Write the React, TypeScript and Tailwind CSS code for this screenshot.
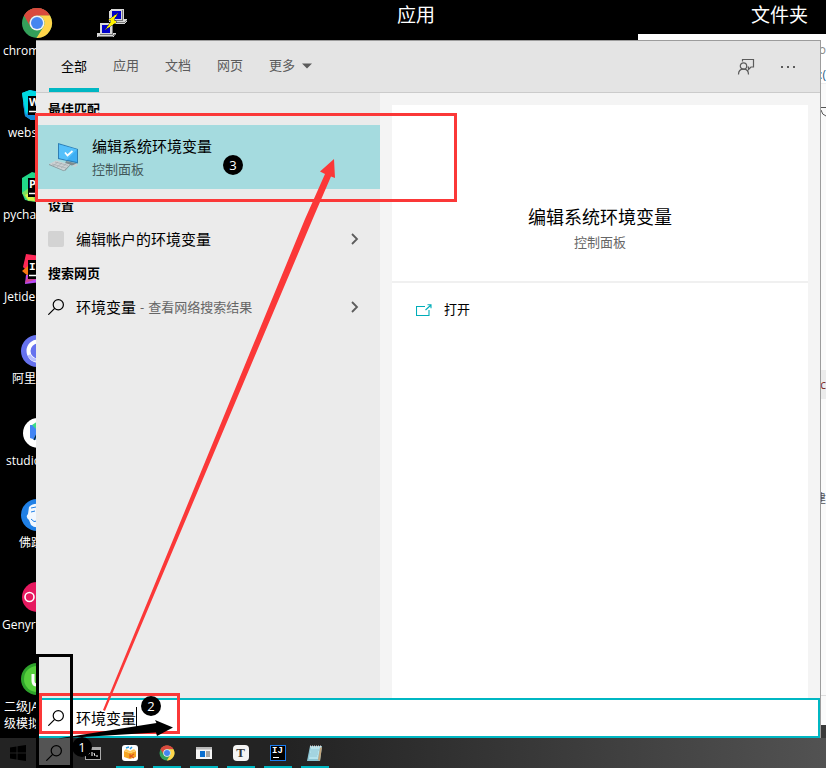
import React from "react";

function ChromeIcon({ className }: { className: string }) {
  return (
    <svg viewBox="0 0 32 32" className={className} aria-hidden="true">
      <circle cx="16" cy="16" r="15" fill="#34a05a" />
      <path d="M3 8.5A15 15 0 0 1 29 8.5H16a7.5 7.5 0 0 0-7 5z" fill="#d94a3d" />
      <path d="M3 8.5 9.5 20A7.5 7.5 0 0 1 16 8.5L29 8.5A15 15 0 0 0 3 8.5z" fill="#d94a3d" />
      <path d="M29 8.5A15 15 0 0 1 15.500 31L22.500 19.750A7.500 7.500 0 0 0 16 8.500z" fill="#ffd54a" />
      <circle cx="16" cy="16" r="7.500" fill="#f3f3f3" />
      <circle cx="16" cy="16" r="6" fill="#4486f0" />
    </svg>
  );
}

function JetBrainsIcon({ kind }: { kind: "WS" | "PC" | "IJ" }) {
  const shapes = {
    WS: (
      <>
        <path d="M1 4 9 1l21 4-2 24-18 2-6-4z" fill="#07c3f2" />
        <path d="m2 14 26 4-2 12-16 1-6-4z" fill="#1688d8" />
        <path d="m1 4 8-3 8 3L5 26z" fill="#00d8e0" />
      </>
    ),
    PC: (
      <>
        <path d="m1 7 10-6 18 5 1 20-14 5-12-2-3-7z" fill="#21d789" />
        <path d="m1 22 8-6 10 15-12-1z" fill="#7be25c" />
        <path d="m4 24 6-3 4 9-7-1z" fill="#d8f24a" />
      </>
    ),
    IJ: (
      <>
        <path d="m5 1 22 3 3 14-18 6-10-10z" fill="#fe2857" />
        <path d="m1 18 6-5 6 6-6 4z" fill="#f97a12" />
        <path d="m5 22 20-2 3 8-24 3z" fill="#b74af7" />
        <path d="m4 30 3-8 9 4z" fill="#d14493" />
      </>
    ),
  };
  return (
    <svg viewBox="0 0 32 32" className="size-8" aria-hidden="true">
      {shapes[kind]}
      <rect x="7" y="7" width="19" height="19" fill="#000" />
      <text x="8" y="17" fontSize="11" fontWeight="700" fill="#fff" fontFamily={kind === "IJ" ? "Liberation Mono, monospace" : "Open Sans, sans-serif"}>
        {kind === "WS" ? "W" : kind === "PC" ? "P" : "I"}
      </text>
      <path d="M8 22.500h8" stroke="#fff" strokeWidth="1.500" />
    </svg>
  );
}

function CloudDriveIcon() {
  return (
    <svg viewBox="0 0 32 32" className="size-8" aria-hidden="true">
      <circle cx="16" cy="16" r="16" fill="#6672ee" />
      <circle cx="17" cy="16" r="9.500" fill="none" stroke="#fff" strokeWidth="4" />
      <path d="M8 20a9 9 0 0 0 9 5" fill="none" stroke="#b9c0ff" strokeWidth="3" />
    </svg>
  );
}

function StudioIcon() {
  return (
    <svg viewBox="0 0 32 32" className="size-8" aria-hidden="true">
      <circle cx="17" cy="16" r="15" fill="#fff" />
      <path d="M9 8h13v13l-7 2-6-2z" fill="#4285f4" />
      <path d="m11 8 6-4 5 4-5 6z" fill="#3ddc84" />
      <path d="m13 23 3-6 3-8" stroke="#073042" strokeWidth="1.500" fill="none" />
    </svg>
  );
}

function BuddhaIcon() {
  return (
    <svg viewBox="0 0 32 32" className="size-8" aria-hidden="true">
      <circle cx="16" cy="16" r="16" fill="#2080e6" />
      <path d="M8 8q4-4 10-3l6 8-2 12q-6 6-12 1l-2-5q-4-3-1-6z" fill="#f2f8ff" />
      <path d="m10 9 5-1m-5 5 4-1m-4 8q3 4 6 2" stroke="#2080e6" strokeWidth="1" fill="none" />
    </svg>
  );
}

function GenyIcon() {
  return (
    <svg viewBox="0 0 32 32" className="size-8" aria-hidden="true">
      <circle cx="16" cy="16" r="15" fill="#e6195f" />
      <circle cx="8.500" cy="16" r="4.500" fill="none" stroke="#fff" strokeWidth="1.600" />
    </svg>
  );
}

function ExamIcon() {
  return (
    <svg viewBox="0 0 32 32" className="size-8" aria-hidden="true">
      <circle cx="16" cy="16" r="16" fill="#2fa32c" />
      <circle cx="16" cy="16" r="13" fill="#56cf3c" />
      <path d="M12 11v7q0 4 4 4t4-4v-7" stroke="#fff" strokeWidth="3" fill="none" />
    </svg>
  );
}

function PuttyIcon() {
  return (
    <svg viewBox="0 0 30 30" className="size-[30px]" aria-hidden="true" shapeRendering="crispEdges">
      <path d="M14 1h13v10h3v3l-3 2H14l-2-2V3z" fill="#d8d8d8" />
      <path d="M15 3h9v8h-9z" fill="#0000c8" />
      <path d="M3 15h13v10h3v2l-3 2H0v-4h3z" fill="#d8d8d8" />
      <path d="M5 17h8v8H5z" fill="#0000c8" />
      <path d="M25 2v10H14M15 16v10H3M1 28h15l3-2M13 14h15l2-2" stroke="#777" fill="none" />
      <path d="m21 5-10 7 3 1-6 9 12-8-3-2z" fill="#fff200" stroke="#333" strokeWidth=".5" />
    </svg>
  );
}

function SearchIcon({ className }: { className: string }) {
  return (
    <svg viewBox="0 0 16 16" className={className} fill="none" stroke="currentColor" strokeWidth="1.200" aria-hidden="true">
      <circle cx="10.300" cy="5.700" r="5.100" />
      <path d="M6.700 9.300.3 15.700" />
    </svg>
  );
}

function SystemIcon() {
  return (
    <svg viewBox="0 0 32 30" className="h-[30px] w-8" aria-hidden="true">
      <path d="m10 1 20 6v14.500L10 17z" fill="#2f7fb5" />
      <path d="m11 2.500 18 5V20l-18-4z" fill="#3eaef3" />
      <path d="m11 2.500 18 5L19 18l-8-2z" fill="#56c0fa" />
      <path d="m17 10.500 2.500 3 5-4.500" stroke="#fff" strokeWidth="1.700" fill="none" />
      <path d="m18 19-1 2.500 7 2 5-2z" fill="#7f8c91" />
      <path d="m1 22 7-3.500 14 4-6 6z" fill="#ccd1d3" />
      <path d="m4 22 14 4M7 20l13 3.500M5 24l5-4m-1 5 5-4m-1 5 5-4" stroke="#9ea6a9" strokeWidth=".6" />
      <path d="m16 28.500 6-6v1l-5 5.500zM1 22l15 6.500v.7L1 23z" fill="#8d979a" />
      <path d="m24 24 4-2 2 1-3 2z" fill="#c9cfd1" />
    </svg>
  );
}

function Chevron() {
  return (
    <svg viewBox="0 0 8 12" className="h-3 w-2" fill="none" stroke="#5c5c5c" strokeWidth="1.800" aria-hidden="true">
      <path d="m1 1 5 5-5 5" />
    </svg>
  );
}

const desktopItems = [
  { label: "chrom", pad: "pl-[3px]", icon: <ChromeIcon className="size-8" /> },
  { label: "webs", pad: "pl-2", icon: <JetBrainsIcon kind="WS" /> },
  { label: "pycha", pad: "pl-[3px]", icon: <JetBrainsIcon kind="PC" /> },
  { label: "Jetide", pad: "pl-1", icon: <JetBrainsIcon kind="IJ" /> },
  { label: "阿里", pad: "pl-3", icon: <CloudDriveIcon /> },
  { label: "studio", pad: "pl-1.5", icon: <StudioIcon /> },
  { label: "佛跳", pad: "pl-[19px]", icon: <BuddhaIcon /> },
  { label: "Genyr", pad: "pl-0.5", icon: <GenyIcon /> },
  { label: "二级JA\n级模拟", pad: "pl-1", icon: <ExamIcon /> },
];

function Desktop() {
  return (
    <div className="absolute inset-0 bg-black text-white">
      <ul className="w-[74px] pt-[7px]">
        {desktopItems.map((item) => (
          <li key={item.label} className="h-[82px]">
            <div className="flex justify-center">{item.icon}</div>
            <p className={"mt-[3px] whitespace-pre text-[12px] leading-[17px] " + item.pad}>{item.label}</p>
          </li>
        ))}
      </ul>
      <div className="absolute left-[97px] top-2">
        <PuttyIcon />
      </div>
      <p className="absolute left-[397px] top-0 text-[19px] leading-[30px]">应用</p>
      <p className="absolute right-[18px] top-0 text-[19px] leading-[30px]">文件夹</p>
      <div className="absolute bottom-0 right-0 h-[43px] w-20 bg-[#3a3a3a]" />
      <div className="absolute bottom-[43px] left-[638px] right-0 top-[34px] bg-[#fafafa] text-[12px] text-[#555]">
        <div className="h-[50px] border-b border-[#eeeeee] bg-white" />
        <span className="absolute right-0 top-1.5 leading-5 text-[#888]">o</span>
        <span className="absolute right-0 top-[31px] leading-5 text-[#2d5b84]">:(</span>
        <svg viewBox="0 0 6 10" className="absolute right-0 top-[73px] h-2.5 w-1.5" fill="none" stroke="#555" aria-hidden="true">
          <path d="M0 .5h6M1 3q1 5 5 6" />
        </svg>
        <div className="absolute right-0 top-[336px] h-[29px] bg-[#ececec] leading-[29px] text-[#7c2c2c]">nc</div>
        <span className="absolute right-0 top-[455px] leading-5">建</span>
        <div className="absolute bottom-[29px] right-0 h-px w-1.5 bg-[#dddddd]" />
      </div>
    </div>
  );
}

const tabs = ["全部", "应用", "文档", "网页"];

function PanelHeader() {
  return (
    <header className="flex h-[52px] items-stretch border-b border-[#cbcbcb] bg-[#e4e4e4] pl-[13px] pr-[22px] text-[13px] text-[#5b5b5b]">
      <nav className="flex gap-0.5">
        {tabs.map((tab, i) => (
          <button
            key={tab}
            className={
              "w-[50px] border-b-4 " +
              (i === 0 ? "border-[#00b7c3] pt-1 text-black" : "border-transparent pt-0.5")
            }
          >
            {tab}
          </button>
        ))}
        <button className="flex items-center gap-[7px] border-b-4 border-transparent pl-3 pt-0.5">
          更多
          <svg viewBox="0 0 10 6" className="h-1.5 w-2.5" fill="#5b5b5b" aria-hidden="true">
            <path d="M0 .5h10l-5 5z" />
          </svg>
        </button>
      </nav>
      <div className="ml-auto flex items-center gap-[23px]">
        <button aria-label="反馈">
          <svg viewBox="0 0 18 18" className="size-[18px]" fill="none" stroke="#5b5b5b" strokeWidth="1.200" aria-hidden="true">
            <circle cx="6.500" cy="8" r="3.200" />
            <path d="M1.500 16.500q0-5.300 5-5.300t5 5.300M5.500 3.500V1.500h11v7.500h-2.500l-2.500 2.500V9h-1" />
          </svg>
        </button>
        <button aria-label="选项" className="flex w-5 justify-center gap-1">
          <span className="size-0.5 bg-[#5b5b5b]" />
          <span className="size-0.5 bg-[#5b5b5b]" />
          <span className="size-0.5 bg-[#5b5b5b]" />
        </button>
      </div>
    </header>
  );
}

function GroupTitle({ children }: { children: React.ReactNode }) {
  return <h2 className="flex h-8 items-center pl-3 pt-px text-[13px] font-bold">{children}</h2>;
}

function Results() {
  return (
    <section className="w-[344px] shrink-0 bg-[#ebebeb] text-black">
      <GroupTitle>最佳匹配</GroupTitle>
      <button className="flex h-16 w-full items-center gap-3 bg-[#a5dbdf] pl-3 text-left">
        <SystemIcon />
        <span className="flex flex-col">
          <span className="text-[15px] leading-6">编辑系统环境变量</span>
          <span className="text-[13px] leading-[22px] text-[#42585a]">控制面板</span>
        </span>
      </button>
      <GroupTitle>设置</GroupTitle>
      <button className="flex h-9 w-full items-center pl-3 pr-[21px] text-left">
        <span className="mr-3 size-4 rounded-xs bg-[#d3d3d3]" />
        <span className="text-[15px]">编辑帐户的环境变量</span>
        <span className="ml-auto">
          <Chevron />
        </span>
      </button>
      <GroupTitle>搜索网页</GroupTitle>
      <button className="flex h-9 w-full items-center pl-3 pr-[21px] text-left">
        <SearchIcon className="mr-3 size-4" />
        <span className="text-[15px]">环境变量</span>
        <span className="ml-1 flex gap-1 pt-0.5 text-[13px] text-[#666666]">
          <span>-</span>
          <span>查看网络搜索结果</span>
        </span>
        <span className="ml-auto">
          <Chevron />
        </span>
      </button>
    </section>
  );
}

function Preview() {
  return (
    <section className="flex min-w-0 flex-1 flex-col bg-[#f4f4f4] px-3 pt-3 text-black">
      <div className="flex-1 bg-white">
        <div className="border-b-2 border-[#f0f0f0] pb-[27px] pt-[99px] text-center">
          <h1 className="text-[18px] leading-[26px]">编辑系统环境变量</h1>
          <p className="text-[13px] leading-6 text-[#666666]">控制面板</p>
        </div>
        <button className="flex h-[54px] w-full items-center gap-3 pl-6 text-[13px]">
          <svg viewBox="0 0 16 12" className="h-3 w-4" fill="none" stroke="#00adb9" strokeWidth="1.100" aria-hidden="true">
            <path d="M9 2.500H.5v9h12.500V6M9.500 6l5.500-5M11.500.8H15v3.500" />
          </svg>
          打开
        </button>
      </div>
    </section>
  );
}

function SearchBox() {
  return (
    <label className="flex h-10 items-center border-2 border-[#00b7c3] bg-white pl-2.5 text-black">
      <SearchIcon className="mr-3 size-4" />
      <input
        aria-label="搜索"
        defaultValue="环境变量"
        className="w-[60px] bg-transparent text-[15px] leading-6 outline-none"
      />
      <span className="h-[22px] w-px bg-black" />
    </label>
  );
}

const tasks: { name: string; active: boolean; icon: React.ReactNode }[] = [
  {
    name: "命令行",
    active: false,
    icon: (
      <svg viewBox="0 0 16 16" className="size-4">
        <path d="M0 2h16v13H0z" fill="#aaa" />
        <path d="M1 5h14v9H1z" fill="#000" />
        <path d="m3 7 2 1-2 1m4-2v4m2-3 1 3m1 0h2" stroke="#fff" fill="none" />
      </svg>
    ),
  },
  {
    name: "快压",
    active: true,
    icon: (
      <svg viewBox="0 0 16 16" className="size-4">
        <rect width="16" height="16" rx="3" fill="#fff" />
        <path d="m2 6 6 2 6-2v6l-6 2-6-2z" fill="#f6a623" />
        <path d="m2 6 2-2 4 2 4-2 2 2-6 2z" fill="#ffc95a" />
        <path d="M8 9v4m4-4-3 2 3 2" stroke="#e0581c" strokeWidth="1.300" fill="none" />
        <path d="m4 3 3-1m1 2 2-2" stroke="#2c9de0" strokeWidth="1.500" />
      </svg>
    ),
  },
  { name: "Chrome", active: true, icon: <ChromeIcon className="size-4" /> },
  {
    name: "窗口",
    active: true,
    icon: (
      <svg viewBox="0 0 16 16" className="size-4">
        <path d="M0 2h16v12H0z" fill="#f5f5f5" />
        <path d="M0 2h16v2.500H0z" fill="#b9b9b9" />
        <path d="M4 6h5v6H4z" fill="#0b6fd0" />
        <path d="M10 7h4m-4 2h4m-4 2h4" stroke="#555" />
      </svg>
    ),
  },
  {
    name: "Typora",
    active: true,
    icon: (
      <span className="flex size-4 items-center justify-center rounded-sm bg-[#f4f4f4] font-['Liberation_Serif',serif] text-[13px] font-bold leading-4 text-[#333]">
        T
      </span>
    ),
  },
  {
    name: "IntelliJ IDEA",
    active: true,
    icon: (
      <span className="relative flex size-4 justify-center border border-[#1a7cf0] bg-black font-['Liberation_Mono',monospace] text-[9px] font-bold leading-[11px] text-white">
        IJ
        <span className="absolute bottom-0.5 left-0.5 h-px w-1.5 bg-white" />
      </span>
    ),
  },
  {
    name: "记事本",
    active: true,
    icon: (
      <svg viewBox="0 0 16 16" className="size-4">
        <path d="M3 1h12l-2 15H0z" fill="#8cc4d2" />
        <path d="M4 2h9l-2 12H2z" fill="#b5e3ed" />
        <path d="m13 3 2-1-2 14-2-1z" fill="#c3a77f" />
        <path d="M3 1.500h12" stroke="#dedede" strokeWidth="2" strokeDasharray="1 1" />
        <path d="M4 5h8m-8 2h7m-8 2h8m-8 2h7" stroke="#78b2c2" strokeWidth=".6" />
      </svg>
    ),
  },
];

function Taskbar() {
  return (
    <footer className="relative flex h-[30px] shrink-0 bg-linear-to-r from-[#232323] from-35% via-[#404040] via-75% to-[#525252]">
      <button aria-label="开始" className="flex w-9 items-center justify-center">
        <svg viewBox="0 0 16 16" className="size-4" fill="#000" aria-hidden="true">
          <path d="m0 2.500 6.500-1v6H0zM7.500 1.300 16 0v7.500H7.500zM0 8.500h6.500v6l-6.500-1zM7.500 8.500H16V16l-8.500-1.300z" />
        </svg>
      </button>
      <button aria-label="搜索" className="flex w-9 items-center justify-center bg-[#545454] text-black">
        <SearchIcon className="size-4" />
      </button>
      <div className="ml-0.5 flex">
        {tasks.map((task) => (
          <button
            key={task.name}
            aria-label={task.name}
            className="flex w-[37px] flex-col items-center justify-between pt-[7px]"
          >
            {task.icon}
            <span className={"h-0.5 w-7 " + (task.active ? "bg-[#00b7c3]" : "bg-transparent")} />
          </button>
        ))}
      </div>
    </footer>
  );
}

function Step({ n, place }: { n: number; place: string }) {
  return (
    <span
      className={
        "absolute flex size-5 items-center justify-center rounded-full bg-black text-[13px] leading-5 text-white " +
        place
      }
    >
      {n}
    </span>
  );
}

function Annotations() {
  return (
    <div className="pointer-events-none absolute inset-0">
      <div className="absolute left-[35px] top-[113px] h-[89px] w-[422px] border-3 border-[#fb3838]" />
      <div className="absolute left-[39px] top-[693px] h-[41px] w-[141px] border-3 border-[#fb3838]" />
      <div className="absolute left-9 top-[654px] h-[114px] w-[37px] border-3 border-black" />
      <svg viewBox="0 0 826 768" className="absolute left-0 top-0 h-[768px] w-[826px]" aria-hidden="true">
        <path d="m334 159-14 12.500 5 2.500-20 45L103 710l2 1 207.700-492L331 176.500l4 1.500z" fill="#fb3838" />
        <path d="m58 738.500 98.500-15.500-1.500-3 18 7.500-16 8.500-1-3.500z" fill="#000" />
      </svg>
      <Step n={1} place="left-[72px] top-[737px]" />
      <Step n={2} place="left-[141px] top-[696px]" />
      <Step n={3} place="left-[223px] top-[155px]" />
    </div>
  );
}

export default function App() {
  return (
    <div className="relative flex min-h-screen flex-col overflow-hidden bg-[#444444] font-['Open_Sans','Noto_Sans_CJK_SC',sans-serif]">
      <Desktop />
      <main className="relative flex flex-1 flex-col pl-9 pr-[5px] pt-10">
        <div className="flex flex-1 flex-col border-r border-t border-[#9c9c9c]">
          <PanelHeader />
          <div className="flex flex-1">
            <Results />
            <Preview />
          </div>
          <SearchBox />
        </div>
      </main>
      <Taskbar />
      <Annotations />
    </div>
  );
}
